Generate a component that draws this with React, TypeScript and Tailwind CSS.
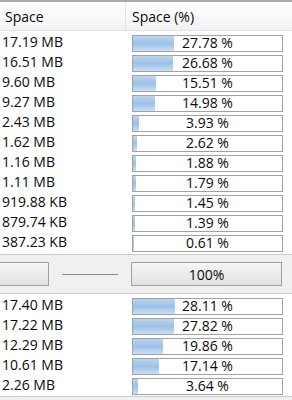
const top = [
  ["17.19 MB", 27.78],
  ["16.51 MB", 26.68],
  ["9.60 MB", 15.51],
  ["9.27 MB", 14.98],
  ["2.43 MB", 3.93],
  ["1.62 MB", 2.62],
  ["1.16 MB", 1.88],
  ["1.11 MB", 1.79],
  ["919.88 KB", 1.45],
  ["879.74 KB", 1.39],
  ["387.23 KB", 0.61],
] as const;

const bottom = [
  ["17.40 MB", 28.11],
  ["17.22 MB", 27.82],
  ["12.29 MB", 19.86],
  ["10.61 MB", 17.14],
  ["2.26 MB", 3.64],
] as const;

function Row({ size, pct }: { size: string; pct: number }) {
  return (
    <div className="flex h-[20px] items-start">
      <div className="w-[126px] pl-[2px] pt-[1px] leading-[18px]">{size}</div>
      <div className="relative ml-[6px] mt-[3px] h-[17px] w-[151px] border border-[#a2a2a2] bg-white">
        <div
          className="absolute inset-y-0 left-0 bg-gradient-to-b from-[#bcd6f0] via-[#9cc1e8] to-[#c9def3]"
          style={{ width: `${pct}%` }}
        />
        <div className="relative -mt-px text-center leading-[16px]">{pct.toFixed(2)} %</div>
      </div>
    </div>
  );
}

export default function App() {
  return (
    <div className="h-[400px] w-[292px] overflow-hidden bg-white text-[14px] text-[#0a0a0a] [font-family:'Open_Sans',sans-serif]">
      <div className="h-[2px] bg-[#a9a9a9]" />
      <div className="flex h-[29px] border-b border-[#e3e3e3] bg-gradient-to-b from-white to-[#f1f2f4]">
        <div className="w-[126px] border-r border-[#e2e4e7] pl-[5px] pt-[4px]">Space</div>
        <div className="pl-[6px] pt-[4px]">Space (%)</div>
      </div>
      <div className="pt-[1px]">
        {top.map(([s, p]) => (
          <Row key={s} size={s} pct={p} />
        ))}
      </div>
      <div className="mt-[2px] flex h-[40px] items-center border-y border-[#c9c9c9] bg-[#f0f0f0]">
        <div className="h-[24px] w-[49px] border border-l-0 border-[#9f9f9f] bg-gradient-to-b from-[#f6f6f6] to-[#e2e2e2]" />
        <div className="ml-[13px] h-px w-[56px] bg-[#8a8a8a]" />
        <div className="ml-[13px] flex h-[24px] w-[151px] items-center justify-center border border-[#9f9f9f] bg-gradient-to-b from-[#f6f6f6] to-[#e2e2e2]">
          100%
        </div>
      </div>
      <div className="pt-[1px]">
        {bottom.map(([s, p]) => (
          <Row key={s} size={s} pct={p} />
        ))}
      </div>
      <div className="mt-[1px] h-[6px] border-t border-[#c9c9c9] bg-[#f0f0f0]" />
    </div>
  );
}
